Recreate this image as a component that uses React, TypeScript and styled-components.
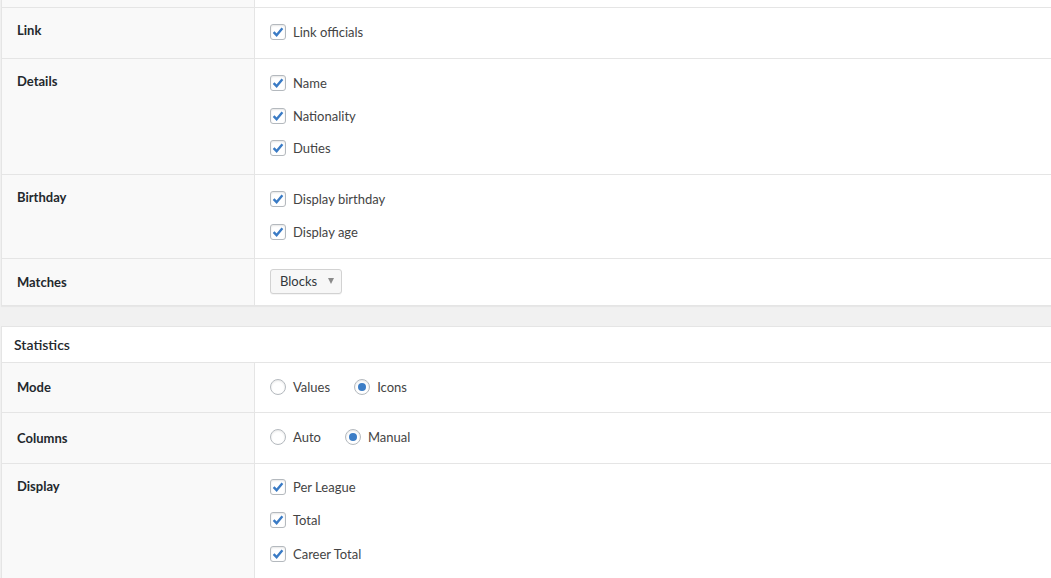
import React from "react";
import styled, { createGlobalStyle } from "styled-components";

const Global = createGlobalStyle`
  html, body {
    margin: 0;
    padding: 0;
    background: #f1f1f1;
    overflow: hidden;
  }
  body {
    font-family: Lato, "Open Sans", "Liberation Sans", sans-serif;
    font-size: 13px;
    color: #444;
  }
`;

const Page = styled.div`
  width: 1051px;
  height: 578px;
  overflow: hidden;
  padding-left: 1px;
  box-sizing: border-box;
`;

const Panel = styled.section<{ $top?: boolean }>`
  width: 1100px;
  background: #fff;
  border: 1px solid #e5e5e5;
  border-top: ${(p) => (p.$top ? "none" : "1px solid #e5e5e5")};
  box-shadow: 0 1px 1px rgba(0, 0, 0, 0.04);
  margin-bottom: 20px;
`;

const Heading = styled.h2`
  margin: 0;
  padding: 8px 12px;
  font-size: 14px;
  line-height: 19px;
  font-weight: 600;
  color: #23282d;
  border-bottom: 1px solid #e5e5e5;
`;

const Row = styled.div<{ $center?: boolean }>`
  display: grid;
  grid-template-columns: 253px 1fr;
  align-items: ${(p) => (p.$center ? "center" : "stretch")};
  background: linear-gradient(to right, #f9f9f9 252px, #fff 252px);
  & + & {
    border-top: 1px solid #e5e5e5;
  }
`;

const StubRow = styled(Row)`
  height: 7px;
`;

const Label = styled.div<{ $center?: boolean }>`
  padding: ${(p) => (p.$center ? "0 15px" : "12px 15px 0")};
  font-weight: 700;
  color: #23282d;
  line-height: 20px;
  align-self: stretch;
  display: flex;
  align-items: ${(p) => (p.$center ? "center" : "flex-start")};
  border-right: 1px solid #e5e5e5;
  box-sizing: border-box;
`;

const Cell = styled.div<{ $pad?: string; $gap?: number }>`
  padding: ${(p) => p.$pad ?? "14px 15px 16px"};
  display: flex;
  flex-direction: column;
  gap: ${(p) => p.$gap ?? 12.5}px;
`;

const Inline = styled.div`
  display: flex;
  align-items: center;
  gap: 24px;
`;

const Option = styled.label`
  display: flex;
  align-items: center;
  gap: 7px;
  height: 20px;
  line-height: 20px;
  color: #444;
  cursor: pointer;
`;

const Box = styled.span`
  width: 16px;
  height: 16px;
  box-sizing: border-box;
  border: 1px solid #b4b9be;
  border-radius: 3px;
  background: #fff;
  box-shadow: inset 0 1px 2px rgba(0, 0, 0, 0.1);
  display: inline-flex;
  align-items: center;
  justify-content: center;
  flex: none;
`;

const Radio = styled(Box)<{ $on?: boolean }>`
  border-radius: 50%;
  &::after {
    content: "";
    width: 8px;
    height: 8px;
    border-radius: 50%;
    background: ${(p) => (p.$on ? "#3c7dc6" : "transparent")};
  }
`;

const Select = styled.div`
  display: inline-flex;
  align-items: center;
  gap: 11px;
  width: 72px;
  height: 25px;
  box-sizing: border-box;
  padding: 0 8px 0 9px;
  border: 1px solid #d2d2d2;
  border-radius: 3px;
  background: #f7f7f7;
  color: #32373c;
  box-shadow: 0 1px 0 rgba(0, 0, 0, 0.04);
`;

const Arrow = styled.span`
  width: 0;
  height: 0;
  border-left: 3.5px solid transparent;
  border-right: 3.5px solid transparent;
  border-top: 6px solid #8a8a8a;
  margin-left: auto;
  margin-right: 1px;
`;

const Check = ({ label }: { label: string }) => (
  <Option>
    <Box>
      <svg width="14" height="14" viewBox="0 0 14 14">
        <path d="M2.6 7.2 L5.6 10.2 L11.4 3.2" fill="none" stroke="#3a7bc5" strokeWidth="2.4" strokeLinecap="butt" strokeLinejoin="miter" />
      </svg>
    </Box>
    {label}
  </Option>
);

const RadioOpt = ({ label, on }: { label: string; on?: boolean }) => (
  <Option>
    <Radio $on={on} />
    {label}
  </Option>
);

export default function App() {
  return (
    <Page>
      <Global />
      <Panel $top>
        <StubRow>
          <Label />
          <div />
        </StubRow>
        <Row>
          <Label>Link</Label>
          <Cell>
            <Check label="Link officials" />
          </Cell>
        </Row>
        <Row>
          <Label>Details</Label>
          <Cell>
            <Check label="Name" />
            <Check label="Nationality" />
            <Check label="Duties" />
          </Cell>
        </Row>
        <Row>
          <Label>Birthday</Label>
          <Cell>
            <Check label="Display birthday" />
            <Check label="Display age" />
          </Cell>
        </Row>
        <Row $center>
          <Label $center>Matches</Label>
          <Cell $pad="10px 15px 11px">
            <div>
              <Select>
                Blocks
                <Arrow />
              </Select>
            </div>
          </Cell>
        </Row>
      </Panel>
      <Panel>
        <Heading>Statistics</Heading>
        <Row $center>
          <Label $center>Mode</Label>
          <Cell $pad="14px 15px 15.5px">
            <Inline>
              <RadioOpt label="Values" />
              <RadioOpt label="Icons" on />
            </Inline>
          </Cell>
        </Row>
        <Row $center>
          <Label $center>Columns</Label>
          <Cell $pad="14px 15px 15.5px">
            <Inline>
              <RadioOpt label="Auto" />
              <RadioOpt label="Manual" on />
            </Inline>
          </Cell>
        </Row>
        <Row>
          <Label>Display</Label>
          <Cell $pad="13px 15px 16px" $gap={13.5}>
            <Check label="Per League" />
            <Check label="Total" />
            <Check label="Career Total" />
          </Cell>
        </Row>
      </Panel>
    </Page>
  );
}
